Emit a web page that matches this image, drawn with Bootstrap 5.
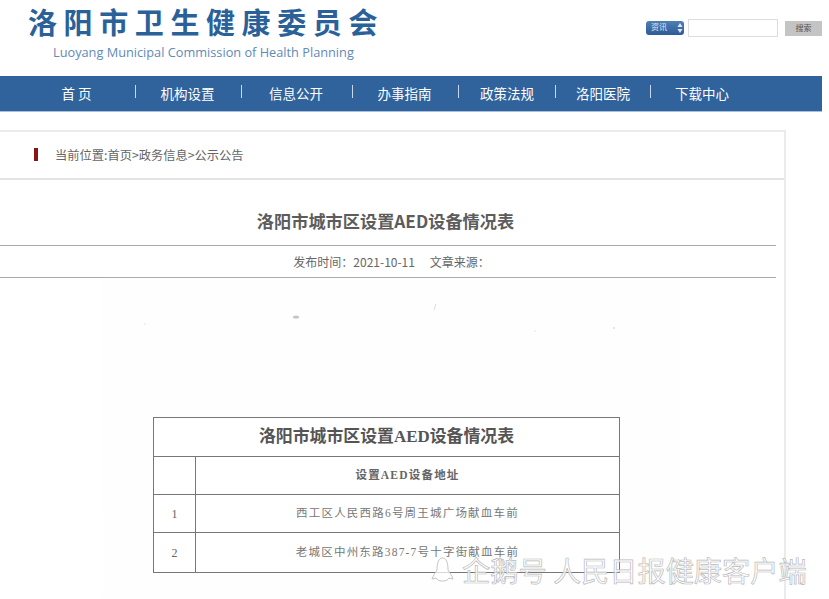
<!DOCTYPE html>
<html lang="zh-CN">

<head>
  <meta charset="utf-8">
  <meta name="viewport" content="width=device-width">
  <title>洛阳市卫生健康委员会</title>
  <link href="https://cdn.jsdelivr.net/npm/bootstrap@5.3.3/dist/css/bootstrap.min.css" rel="stylesheet" />
  <style>
    html, body { height: 599px; overflow: hidden; }
    body { font-family: "Liberation Sans", "Noto Sans CJK SC", sans-serif; color: #666; background: #fff; }
    .page-wrap { position: relative; width: 829px; height: 599px; overflow: hidden; }

    .site-head { height: 76px; padding: 0 7px 0 28px; }
    .logo-cn { font-family: "Noto Sans CJK SC", sans-serif; font-weight: 700; font-size: 29px; line-height: 42px; letter-spacing: 6.6px; color: #2a6199; padding-right: 4px; white-space: nowrap; }
    .logo-en { font-family: "Open Sans", sans-serif; font-size: 12.75px; line-height: 18px; color: #5f8ab8; margin: 1px 0 0 25px; white-space: nowrap; }
    .search-box { margin-top: 19px; height: 18px; }
    .search-type { width: 38px; height: 14px; background: linear-gradient(#4f7fb5, #2c5b98); border-radius: 3px; color: #dfe8f3; font-size: 8px; line-height: 14px; padding-left: 5px; }
    .search-arrows { font-size: 6px; line-height: 6px; width: 8px; }
    .search-input { width: 90px; height: 18px; margin-left: 4px; border: 1px solid #ddd; }
    .search-btn { width: 37px; height: 15px; margin-left: 7px; background: #c4c4c4; color: #555; font-size: 8px; line-height: 15px; text-align: center; }

    .main-nav { width: 822px; height: 36px; background: #30639c; border-bottom: 1px solid #a9c0dc; display: grid; grid-template-columns: 135px 1px 105px 1px 110px 1px 105px 1px 96px 1px 94px 1px 102px; align-items: center; }
    .main-nav a { color: #fff; font-family: "Noto Sans CJK SC", sans-serif; font-size: 13.5px; line-height: 34px; padding-bottom: 2px; text-align: center; text-decoration: none; white-space: nowrap; }
    .main-nav a:nth-child(-n+7) { padding-right: 2px; }
    .main-nav a:first-child { padding-left: 20px; }
    .nav-sep { width: 1px; height: 13px; background: #c9d7e8; margin-top: -5px; }

    .content-panel { width: 786px; height: 470px; margin-top: 18px; border-top: 2px solid #ebebeb; border-right: 2px solid #ebebeb; }
    .crumb-row { height: 48px; border-bottom: 2px solid #e3e3e3; padding-left: 34px; font-size: 12.25px; }
    .crumb-mark { width: 4px; height: 13px; background: #8a1414; margin-right: 17px; margin-top: -2px; }
    .crumb-row span { font-family: "Noto Sans CJK SC", sans-serif; color: #666; }
    .art-title { width: 776px; height: 66px; border-bottom: 1px solid #aaa; padding: 28px 5px 0 0; font-family: "Noto Sans CJK SC", sans-serif; font-size: 17.2px; line-height: 26px; font-weight: 700; color: #5c5c5c; text-align: center; }
    .art-meta { width: 776px; height: 32px; border-bottom: 1px solid #aaa; padding-left: 7px; font-family: "Noto Sans CJK SC", sans-serif; font-size: 12px; line-height: 32px; color: #666; text-align: center; }
    .art-meta span + span { margin-left: 12px; }

    .scan-sheet { position: relative; height: 323px; padding: 139px 0 0 153px; background: linear-gradient(90deg, #fff 12%, #fefefe 14%, #fefefe 86%, #fff 88%); }
    .scan-specks { position: absolute; left: 0; top: 0; }
    .scan-table { width: 467px; margin: 0; table-layout: fixed; border-collapse: collapse; font-family: "Liberation Serif", "Noto Sans CJK SC", serif; }
    .scan-table td { border: 1.5px solid #777; padding: 0; height: 38px; text-align: center; vertical-align: middle; color: #777; background: #fff; font-size: 11.5px; letter-spacing: 1.2px; }
    .scan-table .scan-num { letter-spacing: 0; font-size: 12px; color: #666; }
    .scan-table .scan-head { height: 39px; font-size: 16.9px; font-weight: 700; letter-spacing: 0; color: #555; }
    .scan-table .scan-sub { font-weight: 700; color: #666; font-size: 11.5px; }
    .scan-table .scan-last td { height: 40px; }
    .scan-col-num { width: 42px; }

    .wm-mark { position: absolute; left: 429px; top: 554px; display: flex; align-items: center; gap: 6px; }
    .wm-text { font-family: "Noto Sans CJK SC", sans-serif; font-size: 28.2px; line-height: 32px; white-space: nowrap; color: rgba(255, 255, 255, .75); -webkit-text-stroke: .7px #bbb; }
  </style>
</head>

<body>
  <div class="page-wrap">

    <div class="site-head d-flex justify-content-between">
      <div>
        <div class="logo-cn">洛阳市卫生健康委员会</div>
        <div class="logo-en">Luoyang Municipal Commission of Health Planning</div>
      </div>
      <div class="search-box d-flex align-items-center">
        <div class="search-type d-flex justify-content-between align-items-center">
          <span>资讯</span>
          <svg class="search-arrows" viewBox="0 0 8 10"><path d="M4 0l2.500 4h-5zM4 10l2.500-4h-5z" fill="#dfe8f3"/></svg>
        </div>
        <div class="search-input"></div>
        <div class="search-btn">搜索</div>
      </div>
    </div>

    <nav class="main-nav">
      <a href="#">首 页</a><span class="nav-sep"></span>
      <a href="#">机构设置</a><span class="nav-sep"></span>
      <a href="#">信息公开</a><span class="nav-sep"></span>
      <a href="#">办事指南</a><span class="nav-sep"></span>
      <a href="#">政策法规</a><span class="nav-sep"></span>
      <a href="#">洛阳医院</a><span class="nav-sep"></span>
      <a href="#">下载中心</a>
    </nav>

    <div class="content-panel">
      <div class="crumb-row d-flex align-items-center">
        <div class="crumb-mark"></div>
        <span>当前位置:首页&gt;政务信息&gt;公示公告</span>
      </div>
      <div class="art-title">洛阳市城市区设置AED设备情况表</div>
      <div class="art-meta"><span>发布时间：2021-10-11</span> <span>文章来源：</span></div>
      <div class="scan-sheet">
        <svg class="scan-specks" width="700" height="120">
          <ellipse cx="296" cy="39" rx="3" ry="1.500" fill="#c4c4c4"/>
          <path d="M436 26l-2 6" stroke="#ddd"/>
          <circle cx="614" cy="50" r="1" fill="#ddd"/>
          <circle cx="145" cy="46" r="1" fill="#eee"/>
          <circle cx="535" cy="53" r="1" fill="#eee"/>
        </svg>
        <table class="scan-table">
          <colgroup><col class="scan-col-num"><col></colgroup>
          <tr><td class="scan-head" colspan="2">洛阳市城市区设置AED设备情况表</td></tr>
          <tr><td class="scan-num"></td><td class="scan-sub">设置AED设备地址</td></tr>
          <tr><td class="scan-num">1</td><td>西工区人民西路6号周王城广场献血车前</td></tr>
          <tr class="scan-last"><td class="scan-num">2</td><td>老城区中州东路387-7号十字街献血车前</td></tr>
        </table>
      </div>
    </div>

    <div class="wm-mark">
      <svg width="27" height="28" viewBox="0 0 27 28" fill="none" stroke="#c4c4c4" stroke-width="1">
        <path d="M8 14C8 6 10 2 13.500 2S19 6 19 14c2 3 4 6 5 9l-4-1c-1 2-3 3-6.500 3S8 24 7 22l-4 1c1-3 3-6 5-9z" fill="#fff" fill-opacity=".7"/>
      </svg>
      <span class="wm-text">企鹅号 人民日报健康客户端</span>
    </div>

  </div>
</body>

</html>
